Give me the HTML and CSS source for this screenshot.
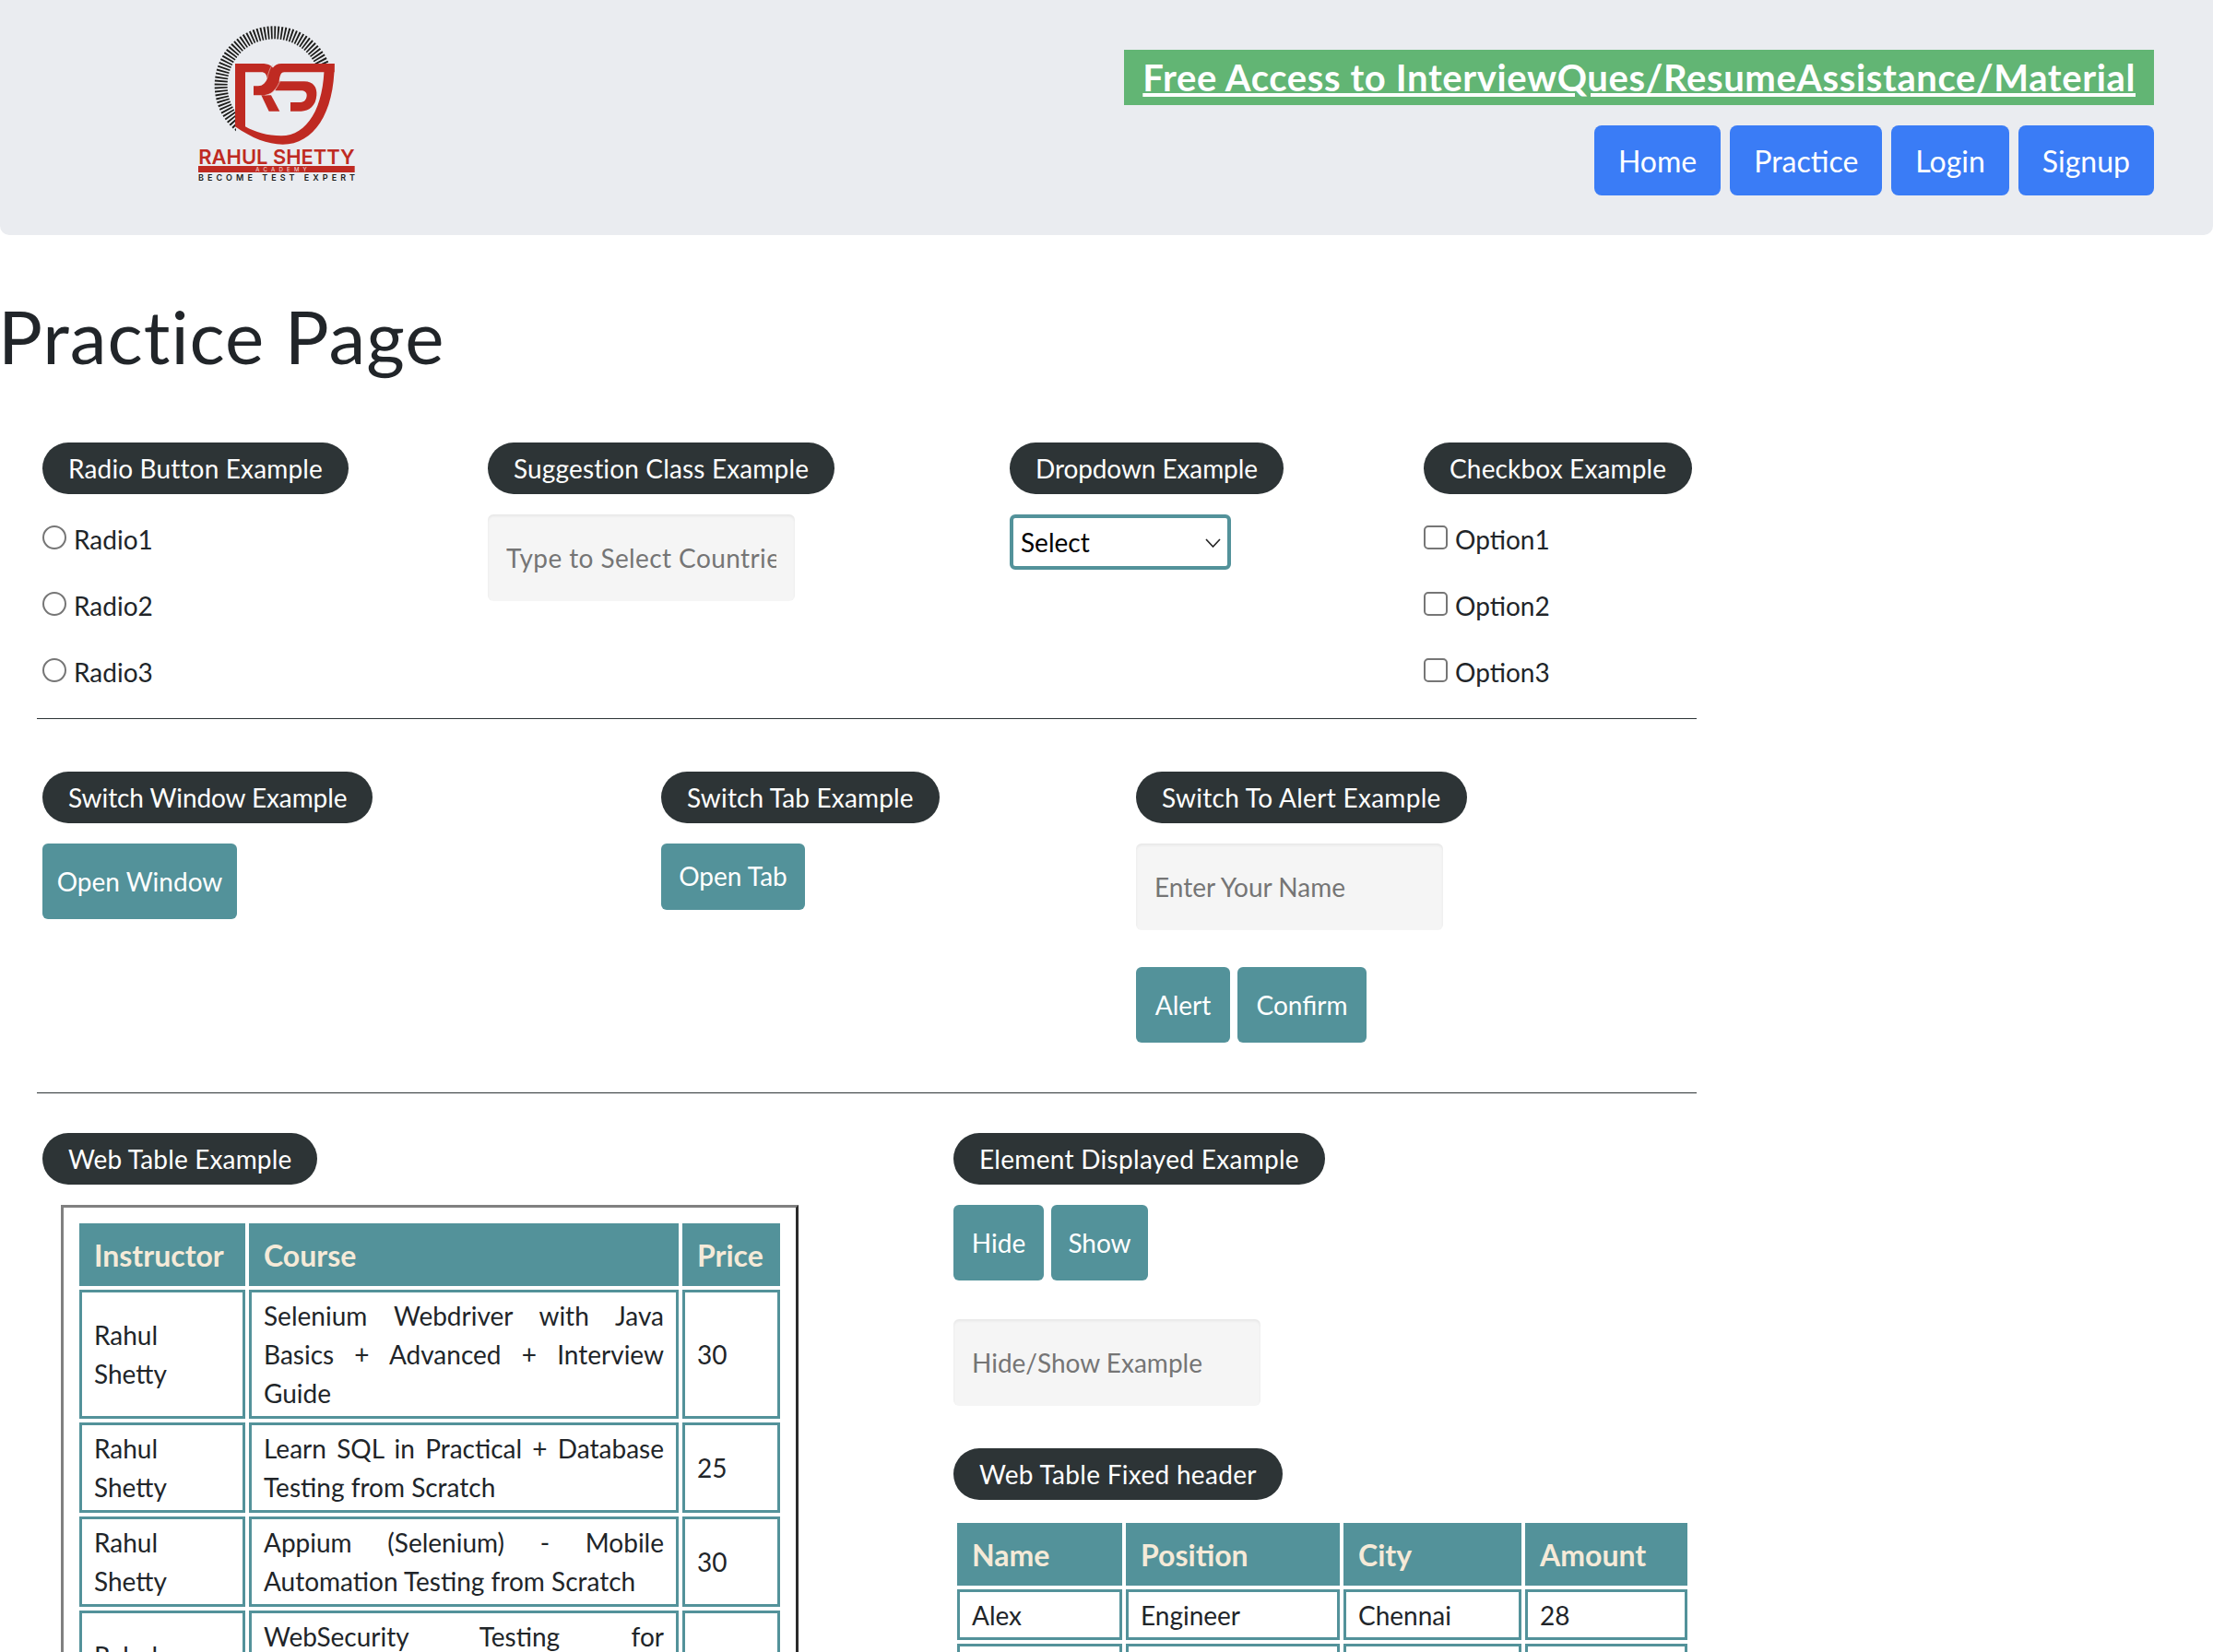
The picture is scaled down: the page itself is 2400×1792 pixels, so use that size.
FILE: index.html
```html
<!DOCTYPE html>
<html lang="en">
<head>
  <meta charset="UTF-8">
  <title>Practice Page</title>
  <link rel="stylesheet" href="styles.css">
</head>
<body>

  <header class="site-header">
    <svg class="logo" viewBox="0 0 900 690" role="img" aria-label="Rahul Shetty Academy">
      <circle class="logo-ticks" cx="441" cy="278" r="172" pathLength="360" stroke-dasharray="1.8 1.8"/>
      <rect class="logo-mask" x="318" y="207" width="330" height="300"/>
      <g transform="translate(300 180)">
        <!-- shield outline -->
        <path class="logo-red-fill" d="M15 27 V232 C70 270 120 290 170 290 C270 290 338 190 338 27 H305 C305 170 250 262 165 262 C120 262 80 250 48 232 V27 Z"/>
        <!-- R top and bowl -->
        <path class="logo-red-fill" d="M15 27 H100 C125 27 140 35 140 50 L118 75 C118 62 112 55 100 55 H15 Z"/>
        <!-- swoosh from the top right into the R band -->
        <path class="logo-red-fill" d="M338 27 H165 C140 27 130 50 122 70 C115 90 105 100 90 100 H75 V130 H105 C135 130 150 110 158 85 C160 70 162 55 175 55 H338 Z"/>
        <!-- S bowl -->
        <path class="logo-red-fill" d="M158 85 H240 C270 85 282 105 280 130 C278 165 255 182 230 182 H195 V153 H228 C240 153 248 143 248 130 C248 120 240 115 230 115 H145 Z"/>
        <!-- R leg -->
        <path class="logo-red-fill" d="M100 130 H132 L160 182 H125 Z"/>
        <path class="logo-seam" d="M137 31 C126 42 124 60 118 75"/>
        <path class="logo-seam" d="M163 80 C152 108 135 128 112 130"/>
      </g>
      <text class="logo-name" x="196" y="533" textLength="508" lengthAdjust="spacingAndGlyphs">RAHUL SHETTY</text>
      <rect class="logo-red-fill" x="195" y="540" width="509" height="21"/>
      <text class="logo-academy" x="382" y="558" textLength="166">ACADEMY</text>
      <text class="logo-motto" x="195" y="588" textLength="510">BECOME TEST EXPERT</text>
    </svg>
    <div class="header-right">
      <a class="promo" href="#">Free Access to InterviewQues/ResumeAssistance/Material</a>
      <nav class="main-nav">
        <button class="nav-btn">Home</button>
        <button class="nav-btn">Practice</button>
        <button class="nav-btn">Login</button>
        <button class="nav-btn">Signup</button>
      </nav>
    </div>
  </header>

  <h1>Practice Page</h1>

  <section class="row row-one">
    <fieldset class="col-radio">
      <legend class="pill">Radio Button Example</legend>
      <label class="check-line"><input type="radio" name="radio"> Radio1</label>
      <label class="check-line"><input type="radio" name="radio"> Radio2</label>
      <label class="check-line"><input type="radio" name="radio"> Radio3</label>
    </fieldset>
    <fieldset class="col-suggest">
      <legend class="pill">Suggestion Class Example</legend>
      <input class="text-input suggest-input" type="text" placeholder="Type to Select Countries">
    </fieldset>
    <fieldset class="col-drop">
      <legend class="pill pill-narrow">Dropdown Example</legend>
      <div class="drop-wrap">
        <select class="drop">
          <option>Select</option>
          <option>Option1</option>
          <option>Option2</option>
          <option>Option3</option>
        </select>
        <svg class="drop-arrow" viewBox="0 0 17 10"><path d="M1 1 L8.5 9 L16 1"/></svg>
      </div>
    </fieldset>
    <fieldset>
      <legend class="pill">Checkbox Example</legend>
      <label class="check-line"><input type="checkbox"> Option1</label>
      <label class="check-line"><input type="checkbox"> Option2</label>
      <label class="check-line"><input type="checkbox"> Option3</label>
    </fieldset>
  </section>

  <hr class="divider">

  <section class="row row-two">
    <fieldset class="col-window">
      <legend class="pill pill-narrow">Switch Window Example</legend>
      <button class="btn btn-window">Open Window</button>
    </fieldset>
    <fieldset class="col-tab">
      <legend class="pill">Switch Tab Example</legend>
      <a class="btn btn-tab" href="#">Open Tab</a>
    </fieldset>
    <fieldset>
      <legend class="pill pill-wide">Switch To Alert Example</legend>
      <input class="text-input" type="text" placeholder="Enter Your Name">
      <div class="btn-line alert-btns">
        <button class="btn btn-alert">Alert</button>
        <button class="btn btn-confirm">Confirm</button>
      </div>
    </fieldset>
  </section>

  <hr class="divider">

  <section class="row row-three">
    <fieldset class="col-table">
      <legend class="pill">Web Table Example</legend>
      <div class="table-box">
        <table class="data-table courses">
          <tr><th class="c-inst">Instructor</th><th class="c-course">Course</th><th>Price</th></tr>
          <tr><td>Rahul Shetty</td><td class="just">Selenium Webdriver with Java Basics + Advanced + Interview Guide</td><td>30</td></tr>
          <tr><td>Rahul Shetty</td><td class="just">Learn SQL in Practical + Database Testing from Scratch</td><td>25</td></tr>
          <tr><td>Rahul Shetty</td><td class="just">Appium (Selenium) - Mobile Automation Testing from Scratch</td><td>30</td></tr>
          <tr><td>Rahul Shetty</td><td class="just">WebSecurity Testing for <span class="nowrap">Beginners-QA</span> knowledge to next level</td><td>20</td></tr>
        </table>
      </div>
    </fieldset>
    <div>
      <fieldset>
        <legend class="pill pill-wide">Element Displayed Example</legend>
        <div class="btn-line">
          <button class="btn btn-hide">Hide</button>
          <button class="btn btn-show">Show</button>
        </div>
        <input class="text-input hide-input" type="text" placeholder="Hide/Show Example">
      </fieldset>
      <fieldset class="fixed-set">
        <legend class="pill pill-wide">Web Table Fixed header</legend>
        <table class="data-table fixed">
          <tr><th class="c-name">Name</th><th class="c-pos">Position</th><th class="c-city">City</th><th>Amount</th></tr>
          <tr><td>Alex</td><td>Engineer</td><td>Chennai</td><td>28</td></tr>
          <tr><td>Ben</td><td>Mechanic</td><td>Bengaluru</td><td>23</td></tr>
        </table>
      </fieldset>
    </div>
  </section>

</body>
</html>
```

FILE: styles.css
```css
* {
  box-sizing: border-box;
}

html, body {
  height: 1792px;
  overflow: hidden;
}

body {
  margin: 0;
  font-family: Lato, "Noto Sans", sans-serif;
  font-size: 28px;
  color: #212529;
  background-color: #ffffff;
}

.site-header {
  height: 255px;
  padding-left: 150px;
  padding-right: 64px;
  display: flex;
  justify-content: space-between;
  background-color: #eaecf0;
  border-radius: 0 0 10px 10px;
}

.logo {
  width: 300px;
  height: 230px;
}

.logo-ticks {
  fill: none;
  stroke: #1d1d1b;
  stroke-width: 42;
}

.logo-mask {
  fill: #eaecf0;
}

.logo-red-fill {
  fill: #bf2a22;
}

.logo-seam {
  fill: none;
  stroke: #e9b5b0;
  stroke-width: 2;
}

.logo-name {
  font-family: Inter, sans-serif;
  font-size: 66px;
  font-weight: 600;
  fill: #bf2a22;
}

.logo-academy {
  font-family: Inter, sans-serif;
  font-size: 18px;
  fill: #f6e3e1;
}

.logo-motto {
  font-family: Inter, sans-serif;
  font-size: 27px;
  font-weight: 600;
  fill: #1d1d1b;
}

.header-right {
  display: flex;
  flex-direction: column;
  align-items: flex-end;
  padding-top: 54px;
}

.promo {
  height: 60px;
  padding: 0 20px;
  line-height: 60px;
  font-size: 40px;
  font-weight: 700;
  letter-spacing: 0.62px;
  color: #ffffff;
  background-color: #62b574;
}

.main-nav {
  display: flex;
  gap: 10px;
  margin-top: 22px;
}

.nav-btn {
  height: 76px;
  padding: 0 26px;
  border: none;
  border-radius: 8px;
  font: inherit;
  font-size: 32px;
  color: #ffffff;
  background-color: #3a7cf6;
}

h1 {
  margin: 0;
  padding-top: 61px;
  height: 225px;
  font-size: 80px;
  font-weight: 400;
  letter-spacing: 1px;
  line-height: 96px;
  text-indent: -2px;
}

fieldset {
  margin: 0;
  padding: 0;
  border: none;
  min-width: 0;
}

.pill {
  height: 56px;
  padding: 0 28px;
  line-height: 56px;
  letter-spacing: 0.15px;
  color: #ffffff;
  background-color: #2d3436;
  border-radius: 28px;
}

.pill-narrow {
  letter-spacing: -0.1px;
}

.pill-wide {
  letter-spacing: 0.3px;
}

.row {
  display: flex;
  padding-left: 46px;
}

.row-one {
  height: 299px;
}

.col-radio {
  width: 483px;
}

.col-suggest {
  width: 566px;
}

.col-drop {
  width: 449px;
}

.check-line {
  display: flex;
  align-items: center;
  gap: 8px;
  height: 72px;
}

.pill + .check-line {
  margin-top: 13px;
}

.check-line input {
  width: 26px;
  height: 26px;
  margin: -4px 0 0;
  border: 2px solid #767676;
  border-radius: 5px;
  background-color: #ffffff;
  appearance: none;
}

.check-line input[type="radio"] {
  border-radius: 50%;
}

.text-input {
  display: block;
  width: 333px;
  height: 94px;
  margin-top: 22px;
  padding: 0 20px;
  border: none;
  border-radius: 6px;
  font: inherit;
  background-color: #f5f5f5;
  box-shadow: inset 0 2px 3px rgba(0, 0, 0, 0.06);
}

.text-input::placeholder {
  color: #757575;
}

.suggest-input {
  letter-spacing: 0.4px;
}

.drop-wrap {
  position: relative;
  width: 240px;
  margin-top: 22px;
}

.drop {
  display: block;
  width: 100%;
  height: 60px;
  padding: 0 8px;
  border: 4px solid #53929a;
  border-radius: 6px;
  font: inherit;
  color: #000000;
  background-color: #ffffff;
  appearance: none;
}

.drop-arrow {
  position: absolute;
  top: 26px;
  right: 11px;
  width: 17px;
  height: 10px;
  pointer-events: none;
}

.drop-arrow path {
  fill: none;
  stroke: #222222;
  stroke-width: 1.6;
}

.divider {
  width: 1800px;
  height: 1px;
  margin: 0 0 0 40px;
  border: none;
  background-color: #2d3436;
}

.row-two {
  height: 405px;
  padding-top: 57px;
}

.col-window {
  width: 671px;
}

.col-tab {
  width: 515px;
}

.btn {
  display: block;
  height: 82px;
  margin-top: 22px;
  padding: 0;
  border: none;
  border-radius: 6px;
  font: inherit;
  color: #ffffff;
  text-align: center;
  text-decoration: none;
  line-height: 82px;
  background-color: #53929a;
}

.btn-window {
  width: 211px;
}

.btn-tab {
  width: 156px;
  height: 72px;
  line-height: 70px;
}

.btn-alert {
  width: 102px;
}

.btn-confirm {
  width: 140px;
}

.btn-hide {
  width: 98px;
}

.btn-show {
  width: 105px;
}

.btn-line {
  display: flex;
  gap: 8px;
}

.alert-btns {
  margin-top: 18px;
}

.row-three {
  padding-top: 43px;
}

.col-table {
  width: 988px;
}

.table-box {
  width: 800px;
  margin: 22px 0 0 20px;
  padding: 13px;
  border: 3px solid;
  border-color: #808080 #2b2b2b #2b2b2b #808080;
}

.data-table {
  width: 100%;
  table-layout: fixed;
  border-collapse: separate;
  border-spacing: 4px;
}

.data-table th {
  height: 68px;
  padding: 0 16px;
  font-size: 32px;
  text-align: left;
  color: #f5ead8;
  background-color: #53929a;
}

.data-table td {
  padding: 4px 13px;
  line-height: 42px;
  border: 3px solid #53929a;
}

.just {
  text-align: justify;
}

.nowrap {
  white-space: nowrap;
}

.c-inst {
  width: 180px;
}

.c-course {
  width: 466px;
}

.hide-input {
  margin-top: 42px;
}

.fixed-set {
  margin-top: 46px;
}

.fixed {
  width: 800px;
  margin-top: 21px;
}

.fixed td {
  padding: 2px 13px;
  height: 55px;
}

.c-name {
  width: 179px;
}

.c-pos {
  width: 232px;
}

.c-city {
  width: 193px;
}
```
